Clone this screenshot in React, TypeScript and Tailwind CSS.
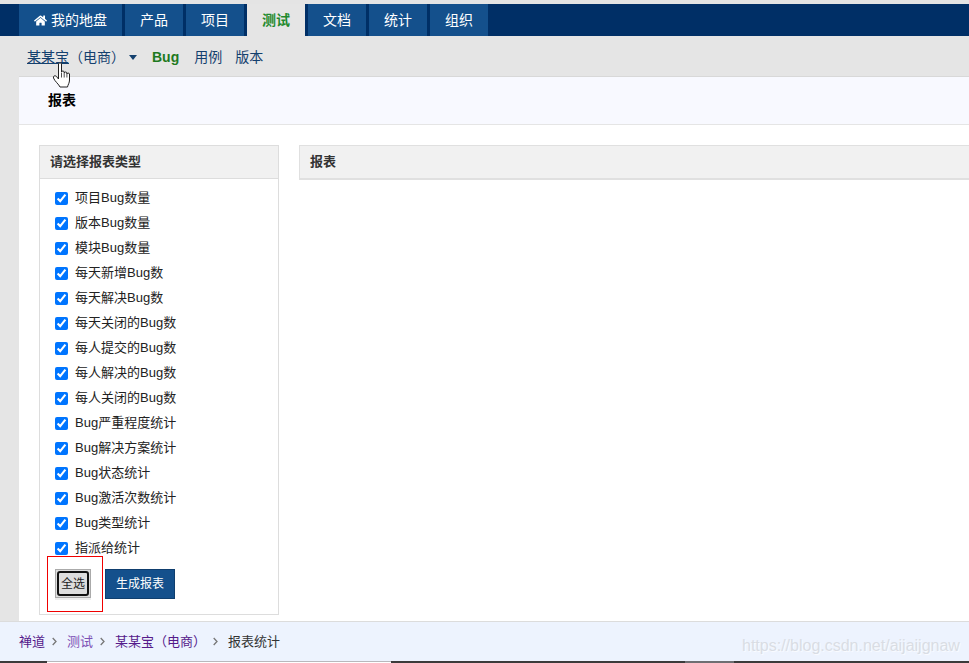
import { FaHome } from 'react-icons/fa';

const tabs = ['产品', '项目', '测试', '文档', '统计', '组织'];

const reports = [
  '项目Bug数量',
  '版本Bug数量',
  '模块Bug数量',
  '每天新增Bug数',
  '每天解决Bug数',
  '每天关闭的Bug数',
  '每人提交的Bug数',
  '每人解决的Bug数',
  '每人关闭的Bug数',
  'Bug严重程度统计',
  'Bug解决方案统计',
  'Bug状态统计',
  'Bug激活次数统计',
  'Bug类型统计',
  '指派给统计',
];

function Sep() {
  return (
    <svg width="5" height="9" viewBox="0 0 5 9" className="ml-[7px] mr-[10px] shrink-0">
      <path d="M0.7 1l3.3 3.5L0.7 8" fill="none" stroke="#777" strokeWidth="1.3" />
    </svg>
  );
}

export default function App() {
  return (
    <div className="relative w-[969px] h-[663px] overflow-hidden bg-[#e5e5e5] text-[13px] text-[#333] font-['Liberation_Sans','Noto_Sans_CJK_SC',sans-serif]">
      {/* Top nav */}
      <div className="h-[4px] bg-[#e4e4e4]" />
      <div className="flex h-[32px] gap-[3px] bg-[#002f66] pl-[19px] text-[14px]">
        <div className="flex w-[103px] items-center justify-center gap-[4px] bg-[#14508c] text-white">
          <FaHome className="text-[13px]" />
          我的地盘
        </div>
        {tabs.map((t) =>
          t === '测试' ? (
            <div key={t} className="flex w-[58px] items-center justify-center bg-[#e5e5e5] font-bold text-[#1f8a2e]">
              {t}
            </div>
          ) : (
            <div key={t} className="flex w-[58px] items-center justify-center bg-[#14508c] text-white">
              {t}
            </div>
          ),
        )}
      </div>

      {/* Sub nav */}
      <div className="flex h-[40px] items-center pl-[27px] pt-[2px] text-[14px] text-[#14406e]">
        <span>
          <span className="underline">某某宝</span>（电商）
        </span>
        <span className="ml-[4px] h-0 w-0 border-x-[4px] border-t-[5px] border-x-transparent border-t-[#14406e]" />
        <span className="ml-[15px] font-bold text-[#1f7a1f]">Bug</span>
        <span className="ml-[15px]">用例</span>
        <span className="ml-[13px]">版本</span>
      </div>

      {/* Main card */}
      <div className="ml-[19px] h-[545px] border-t border-[#d8d8d8] bg-white">
        <div className="flex h-[48px] items-center border-b border-[#e5e5e5] bg-[#f8f9ff] pl-[29px] text-[14px] font-bold text-black">
          报表
        </div>
        <div className="flex gap-[20px] pl-[20px] pt-[20px]">
          <div className="flex h-[470px] w-[240px] shrink-0 flex-col border border-[#dddddd]">
            <div className="flex h-[33px] items-center border-b border-[#dddddd] bg-[#f1f1f1] pl-[10px] font-bold">
              请选择报表类型
            </div>
            <div className="flex flex-col pl-[15px] pt-[6px]">
              {reports.map((r) => (
                <label key={r} className="flex h-[25px] items-center gap-[7px] text-[#222]">
                  <input type="checkbox" defaultChecked className="m-0 h-[13px] w-[13px] translate-y-[1px] accent-[#0075ff]" />
                  {r}
                </label>
              ))}
              <div className="mt-[9px] flex items-start gap-[14px]">
                <button className="flex h-[29px] w-[36px] items-center justify-center border border-[#aaa] bg-[#ddd] p-[1px] shadow-[0_2px_0_#eeeeee]">
                  <span className="flex h-full w-full items-center justify-center rounded-[3px] border-2 border-[#111] text-[12px] text-[#222]">
                    全选
                  </span>
                </button>
                <button className="flex h-[30px] w-[70px] items-center justify-center border border-[#0f3e6e] bg-[#14508c] text-[12px] text-white">
                  生成报表
                </button>
              </div>
            </div>
          </div>
          <div className="flex-1">
            <div className="flex h-[35px] items-center border-b-2 border-l border-t border-[#e0e0e0] bg-[#f1f1f1] pl-[10px] font-bold">
              报表
            </div>
          </div>
        </div>
      </div>

      {/* Footer breadcrumb */}
      <div className="flex h-[40px] items-center border-t border-[#dcdcdc] bg-[#edf3fe] pl-[19px] text-[#551a8b]">
        <span>禅道</span>
        <Sep />
        <span className="text-[#7c4fb5]">测试</span>
        <Sep />
        <span>某某宝（电商）</span>
        <Sep />
        <span className="text-[#333]">报表统计</span>
      </div>

      {/* Taskbar edge at the bottom of the capture */}
      <div className="flex h-[2px] bg-[#3b3b3b]">
        <div className="ml-[47px] w-[344px] border-t border-[#b8b8bc] bg-white" />
        <div className="ml-[294px] w-[49px] bg-[#6e6e72]" />
      </div>

      {/* Annotations over the screenshot */}
      <div className="absolute left-[47px] top-[556px] h-[56px] w-[56px] border border-[#f00000]" />
      <svg className="absolute left-[52px] top-[62px]" width="21" height="26" viewBox="0 0 21 26">
        <path
          d="M6.5 2c0-1.6 3-1.6 3 0v8c0-1.3 2.7-1.3 2.7 0v1c0-1.3 2.7-1.3 2.7 0v1c0-1.2 2.6-1.2 2.6 0v6c0 3-1.5 4.500-2 7H8c-1-2.500-5.500-6-6.500-9-.6-1.800 1.200-3 2.800-1.700L6.500 17z"
          fill="#fff"
          stroke="#222"
          strokeWidth="1"
          strokeLinejoin="round"
        />
        <path d="M9.500 10.500v5M12.200 11v4.500M14.900 12v3.500" stroke="#222" strokeWidth="0.8" fill="none" />
      </svg>
      <div className="absolute left-[742px] top-[634px] text-[16px] text-[#d9dde4] [text-shadow:1px_1px_1px_rgba(255,255,255,0.8)]">
        https://blog.csdn.net/aijaijgnaw
      </div>
    </div>
  );
}
